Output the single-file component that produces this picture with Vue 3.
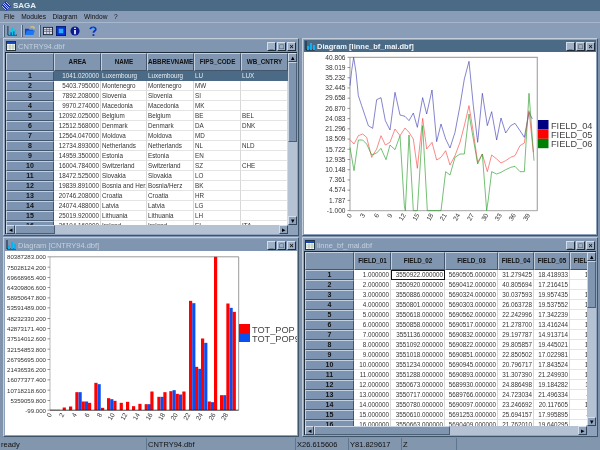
<script setup>
// chart points are read off a 3x grid, pts() brings them back to pixels
const pts = list => list.map(([x, y]) => `${x / 3},${y / 3}`).join(' ')

const blue = [[150,170],[155,125],[161,85],[168,130],[175,200],[185,230],[195,260],[205,290],[218,298],[230,212],[243,206],[256,275],[270,303],[285,190],[300,258],[315,262],[327,275],[340,252],[352,295],[368,206],[380,255],[396,183],[410,338],[423,285],[437,330],[450,357],[465,310],[480,230],[493,150],[507,97],[520,230],[533,340],[547,193],[562,290],[575,248],[590,333],[603,267],[617,312],[632,290],[645,283],[660,305],[673,325],[687,250],[697,270]]
const red = [[150,332],[162,345],[175,320],[188,315],[200,325],[215,385],[230,360],[243,320],[256,348],[270,340],[285,300],[300,320],[315,297],[327,310],[340,330],[352,418],[368,268],[380,360],[396,340],[410,393],[423,385],[437,365],[450,408],[465,380],[480,340],[493,290],[507,230],[520,310],[533,400],[547,375],[562,428],[575,378],[590,390],[603,402],[617,395],[632,385],[645,380],[660,350],[673,342],[687,245],[700,370]]
const green = [[150,355],[162,425],[175,333],[188,333],[200,345],[215,378],[230,372],[243,358],[258,392],[270,348],[285,362],[300,320],[313,530],[316,545],[327,318],[340,545],[352,545],[368,290],[382,545],[423,545],[437,428],[450,438],[465,385],[480,375],[493,375],[507,255],[520,330],[533,405],[547,375],[560,545],[565,510],[575,428],[590,435],[603,430],[617,422],[632,415],[645,412],[660,428],[673,428],[687,193],[702,395]]
const series = [
  { color: '#3a3ab0', data: blue },
  { color: '#f84040', data: red },
  { color: '#209a20', data: green }
]

const lineY = ['40.806', '38.019', '35.232', '32.445', '29.658', '26.870', '24.083', '21.296', '18.509', '15.722', '12.935', '10.148', '7.361', '4.574', '1.787', '-1.000']
const lineX = [[150, '0'], [190, '3'], [232, '6'], [272, '9'], [312, '12'], [353, '15'], [395, '18'], [435, '21'], [475, '24'], [517, '27'], [560, '30'], [600, '33'], [642, '36'], [685, '39']]
const lineLegend = [['#000080', 'FIELD_04'], ['#ff0000', 'FIELD_05'], ['#008000', 'FIELD_06']]

const barY = ['80387283.000', '75028124.200', '69668965.400', '64309806.600', '58950647.800', '53591489.000', '48232330.200', '42873171.400', '37514012.600', '32154853.800', '26795695.000', '21436536.200', '16077377.400', '10718218.600', '5359059.800', '-99.000']
const barYPos = [67, 98, 129, 159, 190, 220, 252, 282, 313, 344, 375, 405, 436, 467, 498, 527]
const barX = ['0', '2', '4', '6', '8', '10', '12', '14', '16', '18', '20', '22', '24', '26', '28']
// x, top of red bar, top of blue bar (0 = no blue bar)
const bars = [[150,526,526],[170,526,0],[188,519,0],[207,516,0],[226,473,473],[245,501,501],[264,505,0],[283,445,449],[303,520,0],[321,491,494],[340,499,0],[359,505,0],[378,502,0],[396,515,0],[415,508,0],[434,509,509],[451,471,0],[472,487,487],[490,473,0],[508,470,467],[527,478,480],[547,471,0],[567,199,206],[585,397,403],[603,312,325],[623,501,503],[642,67,0],[660,482,482],[679,207,220],[698,232,0]]

const tables = [
  {
    key: 'cntry',
    title: 'CNTRY94.dbf',
    cols: [48, 47, 46, 47, 47, 47, 30],
    left: [false, true, true, true, true, false],
    head: ['AREA', 'NAME', 'ABBREVNAME', 'FIPS_CODE', 'WB_CNTRY', ''],
    rows: [
      ['1041.020000', 'Luxembourg', 'Luxembourg', 'LU', 'LUX', ''],
      ['5403.795000', 'Montenegro', 'Montenegro', 'MW', '', ''],
      ['7892.208000', 'Slovenia', 'Slovenia', 'SI', '', ''],
      ['9970.274000', 'Macedonia', 'Macedonia', 'MK', '', ''],
      ['12092.025000', 'Belgium', 'Belgium', 'BE', 'BEL', ''],
      ['12512.568000', 'Denmark', 'Denmark', 'DA', 'DNK', ''],
      ['12564.047000', 'Moldova', 'Moldova', 'MD', '', ''],
      ['12734.893000', 'Netherlands', 'Netherlands', 'NL', 'NLD', ''],
      ['14959.350000', 'Estonia', 'Estonia', 'EN', '', ''],
      ['16004.784000', 'Switzerland', 'Switzerland', 'SZ', 'CHE', ''],
      ['18472.525000', 'Slovakia', 'Slovakia', 'LO', '', ''],
      ['19839.891000', 'Bosnia and Herz', 'Bosnia/Herz', 'BK', '', ''],
      ['20746.208000', 'Croatia', 'Croatia', 'HR', '', ''],
      ['24074.488000', 'Latvia', 'Latvia', 'LG', '', ''],
      ['25019.920000', 'Lithuania', 'Lithuania', 'LH', '', ''],
      ['26194.160000', 'Ireland', 'Ireland', 'EI', 'ITA', '']
    ],
    selectedRow: 0,
    thumbV: 80,
    thumbH: 40
  },
  {
    key: 'linie',
    title: 'linne_bf_mai.dbf',
    cols: [49, 37, 54, 53, 36, 36, 36],
    left: [],
    head: ['FIELD_01', 'FIELD_02', 'FIELD_03', 'FIELD_04', 'FIELD_05', 'FIELD_06'],
    rows: [
      ['1.000000', '3550922.000000', '5690505.000000', '31.279425', '18.418933', '16.392'],
      ['2.000000', '3550920.000000', '5690412.000000', '40.805694', '17.216415', '9.851'],
      ['3.000000', '3550886.000000', '5690324.000000', '30.037593', '19.957435', '18.092'],
      ['4.000000', '3550801.000000', '5690303.000000', '26.063728', '19.537552', '18.341'],
      ['5.000000', '3550618.000000', '5690562.000000', '22.242996', '17.342239', '15.932'],
      ['6.000000', '3550858.000000', '5690517.000000', '21.278700', '13.416244', '14.061'],
      ['7.000000', '3551136.000000', '5690832.000000', '29.197787', '14.913714', '14.292'],
      ['8.000000', '3551092.000000', '5690822.000000', '29.805857', '19.445021', '15.921'],
      ['9.000000', '3551018.000000', '5690851.000000', '22.850502', '17.022981', '12.841'],
      ['10.000000', '3551234.000000', '5690945.000000', '20.796717', '17.843524', '16.642'],
      ['11.000000', '3551288.000000', '5690893.000000', '31.307390', '21.249930', '15.451'],
      ['12.000000', '3550673.000000', '5689930.000000', '24.886498', '19.184282', '19.112'],
      ['13.000000', '3550717.000000', '5689766.000000', '24.723034', '21.496334', '-1.000'],
      ['14.000000', '3550780.000000', '5690097.000000', '23.246692', '20.117605', '19.601'],
      ['15.000000', '3550610.000000', '5691253.000000', '25.694157', '17.995895', '-1.000'],
      ['16.000000', '3550663.000000', '5690409.000000', '21.762010', '19.640295', '-1.000']
    ],
    selectedRow: -1,
    focusCell: [0, 1],
    thumbV: 47,
    thumbH: 136
  }
]
</script>

<template>
  <div class="saga">
    <div class="app-title">
      <svg class="logo" viewBox="0 0 10 10">
        <path d="M5 0 10 5 5 10 0 5Z" fill="#1530c0" />
        <path d="M2 3 7 8M3 2 8 7M5 1 9 5M1 5 5 9" stroke="#fff" stroke-width=".7" />
      </svg>
      <span>SAGA</span>
    </div>
    <div class="menu">
      <span>File</span><span>Modules</span><span>Diagram</span><span>Window</span><span>?</span>
    </div>
    <div class="toolbar">
      <i class="sep"></i>
      <svg class="tool" viewBox="0 0 11 11">
        <path d="M1 0v10h10" fill="none" stroke="#123" />
        <path d="M2 10V5h2v5zM5 10V2h2v8zM8 10V4h2v6z" fill="#08c8e8" />
        <path d="M4 10V7h1v3zM7 10V6h1v4z" fill="#1020c0" />
      </svg>
      <i class="sep"></i>
      <svg class="tool" viewBox="0 0 11 11">
        <path d="M0 3h4l1 1h4v6H0z" fill="#1040c0" />
        <path d="M2 5h9l-2 5H0z" fill="#1c78f0" />
        <path d="M6 1l4 0v2" fill="none" stroke="#f0e040" />
      </svg>
      <i class="sep"></i>
      <svg class="tool" viewBox="0 0 11 11">
        <rect x=".5" y="1.5" width="10" height="8" fill="#dde" stroke="#123" />
        <path d="M1 4h9M1 6h9M4 2v7M7 2v7" stroke="#456" stroke-width=".7" />
      </svg>
      <svg class="tool t4" viewBox="0 0 11 11">
        <rect x=".5" y=".5" width="10" height="10" fill="#0a30d8" stroke="#061a70" />
        <rect x="3" y="3" width="5" height="5" fill="#28b0ff" />
      </svg>
      <svg class="tool t5" viewBox="0 0 11 11">
        <circle cx="5.5" cy="5.5" r="5" fill="#0a1a90" />
        <path d="M4.6 2h1.8v1.4H4.6zM4.6 4.4h1.8V9H4.6z" fill="#fff" />
      </svg>
      <svg class="tool t6" viewBox="0 0 11 11">
        <path d="M2.5 3.5C3 1 8 .5 8.5 3.5 8.8 5.5 6 5.5 6 7.5" fill="none" stroke="#0c30c8" stroke-width="2" />
        <path d="M5 9h2v2H5z" fill="#0c30c8" />
        <path d="M4 3c1-1 3-1 3 .5" fill="none" stroke="#30d0f0" />
      </svg>
    </div>

    <div class="desk">
      <section
        v-for="t in tables"
        :key="t.key"
        class="win"
        :class="t.key"
      >
        <header class="win-title">
          <svg class="win-icon" viewBox="0 0 10 10">
            <rect x=".5" y=".5" width="9" height="9" fill="#fff" stroke="#234" />
            <path d="M1 1h8v2H1z" fill="#1848c8" />
            <path d="M1 5h8M1 7h8M4 3v6M7 3v6" stroke="#8a8" stroke-width=".6" />
          </svg>
          <span class="win-name">{{ t.title }}</span>
          <span class="win-btns"><b>_</b><b>□</b><b>×</b></span>
        </header>
        <div class="grid-box">
          <div class="grid-clip">
            <table class="dbf">
              <colgroup>
                <col v-for="(w, i) in t.cols" :key="i" :style="{ width: w + 'px' }" />
              </colgroup>
              <thead>
                <tr>
                  <th></th>
                  <th v-for="h in t.head" :key="h">{{ h }}</th>
                </tr>
              </thead>
              <tbody>
                <tr v-for="(row, r) in t.rows" :key="r" :class="{ sel: r === t.selectedRow }">
                  <th>{{ r + 1 }}</th>
                  <td
                    v-for="(v, c) in row"
                    :key="c"
                    :class="{ left: t.left[c], focus: t.focusCell && t.focusCell[0] === r && t.focusCell[1] === c }"
                  >{{ v }}</td>
                </tr>
              </tbody>
            </table>
          </div>
          <div class="sb-v">
            <span class="sb-btn">▴</span>
            <span class="sb-track"><i :style="{ height: t.thumbV + 'px' }"></i></span>
            <span class="sb-btn">▾</span>
          </div>
          <div class="sb-h">
            <span class="sb-btn">◂</span>
            <span class="sb-track"><i :style="{ width: t.thumbH + 'px' }"></i></span>
            <span class="sb-btn">▸</span>
          </div>
          <div class="sb-corner"></div>
        </div>
      </section>

      <section class="win line-win">
        <header class="win-title active">
          <svg class="win-icon" viewBox="0 0 10 10">
            <path d="M1 0v9h9" fill="none" stroke="#123" />
            <path d="M2 9V5h2v4zM5 9V2h2v7zM8 9V4h2v5z" fill="#10b0f0" />
          </svg>
          <span class="win-name">Diagram [linne_bf_mai.dbf]</span>
          <span class="win-btns"><b>_</b><b>□</b><b>×</b></span>
        </header>
        <svg class="plot" viewBox="4 23 292 182">
          <path d="M50 28.3H237.3V181.7" fill="none" stroke="#a8a8a8" stroke-width="1.2" />
          <path d="M50 28.3V181.7H237.3" fill="none" stroke="#8c8c8c" stroke-width=".8" />
          <path
            v-for="(l, i) in lineY"
            :key="l"
            :d="`M47.5 ${28.3 + i * 10.22}H50`"
            stroke="#555"
            stroke-width=".6"
          />
          <polyline
            v-for="s in series"
            :key="s.color"
            :points="pts(s.data)"
            fill="none"
            :stroke="s.color"
            stroke-opacity=".62"
            stroke-width="1"
          />
          <text
            v-for="(l, i) in lineY"
            :key="l"
            class="tick"
            x="45.5"
            :y="30.6 + i * 10.22"
            text-anchor="end"
          >{{ l }}</text>
          <text
            v-for="[x, l] in lineX"
            :key="l"
            class="tick"
            text-anchor="end"
            :transform="`translate(${x / 3 + 2} 186) rotate(-60)`"
          >{{ l }}</text>
          <g v-for="([c, l], i) in lineLegend" :key="l">
            <rect x="238" :y="91 + i * 9.4" width="10.5" height="9.4" :fill="c" />
            <text class="legend" x="251" :y="99.5 + i * 9.4">{{ l }}</text>
          </g>
        </svg>
      </section>

      <section class="win bar-win">
        <header class="win-title">
          <svg class="win-icon" viewBox="0 0 10 10">
            <path d="M1 0v9h9" fill="none" stroke="#123" />
            <path d="M2 9V5h2v4zM5 9V2h2v7zM8 9V4h2v5z" fill="#10b0f0" />
          </svg>
          <span class="win-name">Diagram [CNTRY94.dbf]</span>
          <span class="win-btns"><b>_</b><b>□</b><b>×</b></span>
        </header>
        <svg class="plot" viewBox="5 17 292 183">
          <path d="M50 22.3H238.7V175.7" fill="none" stroke="#808080" stroke-width=".8" />
          <path d="M50 22.3V175.7" fill="none" stroke="#a8a8a8" stroke-width=".8" />
          <path
            v-for="(l, i) in barY"
            :key="l"
            :d="`M47.5 ${barYPos[i] / 3}H50`"
            stroke="#555"
            stroke-width=".6"
          />
          <g v-for="[x, r, b] in bars" :key="x">
            <rect :x="x / 3" :y="r / 3" width="3.2" :height="(527 - r) / 3" fill="#ff0000" />
            <rect v-if="b" :x="x / 3 + 3.2" :y="b / 3" width="3.2" :height="(527 - b) / 3" fill="#0a50f0" />
          </g>
          <path d="M50 175.7H238.7" fill="none" stroke="#111" stroke-width=".8" />
          <text
            v-for="(l, i) in barY"
            :key="l"
            class="tick small"
            x="46"
            :y="barYPos[i] / 3 + 2.4"
            text-anchor="end"
          >{{ l }}</text>
          <text
            v-for="(l, i) in barX"
            :key="l"
            class="tick"
            text-anchor="end"
            :transform="`translate(${52 + i * 12.6} 180) rotate(-60)`"
          >{{ l }}</text>
          <rect x="239" y="89.5" width="11" height="9" fill="#ff0000" />
          <rect x="239" y="98.5" width="11" height="9" fill="#0a50f0" />
          <text class="legend" x="252" y="98">TOT_POP</text>
          <text class="legend" x="252" y="107">TOT_POP9</text>
        </svg>
      </section>
    </div>

    <footer class="status">
      <span class="p1">ready</span>
      <span class="p2">CNTRY94.dbf</span>
      <span class="p3">X26.615606</span>
      <span class="p4">Y81.829617</span>
      <span class="p5">Z</span>
      <span class="p6"></span>
    </footer>
  </div>
</template>

<style scoped>
.saga {
  width: 600px;
  height: 450px;
  overflow: hidden;
  display: flex;
  flex-direction: column;
  background: #8a9db8;
  font-family: "Liberation Sans", Arial, sans-serif;
  font-size: 8px;
  color: #111;
  filter: blur(0.4px);
}

.app-title {
  height: 11px;
  display: flex;
  align-items: center;
  gap: 2px;
  padding-left: 1px;
  background: #4a6a85;
  color: #e8eef4;
  font-weight: bold;
  font-size: 8px;
}

.logo {
  width: 10px;
  height: 10px;
}

.menu {
  height: 12px;
  display: flex;
  align-items: center;
  gap: 6.5px;
  padding-left: 4px;
  border-bottom: 1px solid #a8b8cc;
  box-sizing: border-box;
  font-size: 6.6px;
}

.toolbar {
  height: 15px;
  display: flex;
  align-items: center;
  padding-left: 3px;
  border-bottom: 1px solid #3e5468;
  margin-bottom: -1px;
}

.sep {
  width: 2px;
  height: 12px;
  box-sizing: border-box;
  border-left: 1px solid #c0ccdc;
  border-right: 1px solid #4a6078;
  margin: 0 2px 0 4px;
  flex: none;
}

.sep:first-child {
  margin-left: 0;
}

.tool {
  width: 10px;
  height: 10px;
  flex: none;
}

.t4 {
  margin-left: 3px;
}

.t5 {
  margin-left: 4px;
}

.t6 {
  margin-left: 8px;
}

.desk {
  flex: 1;
  min-height: 0;
  display: grid;
  grid-template-columns: 296px 296px;
  grid-template-rows: 198px 200px;
  column-gap: 3px;
  row-gap: 1px;
  padding: 0 0 1px 3px;
  background: #7f93ac;
}

.win {
  min-width: 0;
  min-height: 0;
  display: flex;
  flex-direction: column;
  background: #8ea2bc;
  border: 1px solid #3e5468;
  border-top-color: #c2cedc;
  border-left-color: #c2cedc;
  box-sizing: border-box;
  padding: 1px;
  overflow: hidden;
}

.cntry {
  grid-area: 1 / 1;
}

.line-win {
  grid-area: 1 / 2;
}

.bar-win {
  grid-area: 2 / 1;
}

.linie {
  grid-area: 2 / 2;
}

.win-title {
  height: 12px;
  flex: none;
  display: flex;
  align-items: center;
  gap: 2px;
  padding: 0 1px;
  background: #8096b0;
  color: #c4d0de;
  font-size: 7.5px;
}

.win-title.active {
  background: #4a6a85;
  color: #f0f4f8;
  font-weight: bold;
}

.win-icon {
  width: 10px;
  height: 10px;
  flex: none;
}

.win-name {
  flex: 1;
  white-space: nowrap;
}

.win-btns {
  display: flex;
  gap: 1px;
}

.win-btns b {
  width: 9px;
  height: 9px;
  display: flex;
  align-items: center;
  justify-content: center;
  background: #9db0c6;
  border: 1px solid #1e2c3c;
  border-top-color: #d4deea;
  border-left-color: #d4deea;
  box-sizing: border-box;
  font-size: 7px;
  line-height: 1;
  color: #111;
  font-weight: bold;
}

.grid-box {
  flex: 1;
  min-height: 0;
  display: grid;
  grid-template-columns: 1fr 9px;
  grid-template-rows: 1fr 9px;
  background: #8ea2bc;
  border-top: 1px solid #1c2a38;
  border-left: 1px solid #1c2a38;
}

.grid-clip {
  overflow: hidden;
  background: #fff;
  min-width: 0;
  min-height: 0;
}

.dbf {
  table-layout: fixed;
  border-collapse: separate;
  border-spacing: 0;
  width: 0;
  font-size: 6.3px;
  line-height: 8px;
}

.dbf th {
  background: #7d93b2;
  border: 1px solid #43566c;
  border-top-color: #c4d0de;
  border-left-color: #c4d0de;
  padding: 0;
  box-sizing: border-box;
  font-weight: bold;
  text-align: center;
  height: 10px;
  font-size: 7px;
  white-space: nowrap;
  overflow: hidden;
}

.dbf thead th {
  height: 18px;
  background: #7f95b0;
  font-size: 6.3px;
}

.dbf td {
  height: 10px;
  padding: 0 1px;
  box-sizing: border-box;
  border-right: 1px solid #d8d8d8;
  border-bottom: 1px solid #e4e4e4;
  text-align: right;
  white-space: nowrap;
  overflow: hidden;
  color: #333;
  background: #fff;
}

.dbf td.left {
  text-align: left;
}

.dbf td.focus {
  outline: 1px solid #111;
  outline-offset: -1px;
}

.sel td {
  background: #4a6a85;
  color: #e4ecf4;
  border-color: #4a6a85;
}

.sb-v,
.sb-h {
  display: flex;
  background: #b4c2d4;
}

.sb-v {
  flex-direction: column;
}

.sb-btn {
  flex: none;
  width: 9px;
  height: 9px;
  display: flex;
  align-items: center;
  justify-content: center;
  background: #8ea2bc;
  border: 1px solid #33475c;
  border-top-color: #d4deea;
  border-left-color: #d4deea;
  box-sizing: border-box;
  font-size: 7px;
  line-height: 1;
  color: #000;
}

.sb-track {
  flex: 1;
  display: flex;
  align-items: flex-start;
}

.sb-track i {
  display: block;
  width: 100%;
  height: 100%;
  background: #8096b0;
  border: 1px solid #4a5e74;
  border-top-color: #c8d4e2;
  border-left-color: #c8d4e2;
  box-sizing: border-box;
}

.sb-corner {
  background: #8ea2bc;
}

.plot {
  flex: 1;
  min-height: 0;
  width: 100%;
  background: #fff;
  display: block;
}

.tick {
  font-size: 6.6px;
  fill: #333;
}

.tick.small {
  font-size: 6.1px;
}

.legend {
  font-size: 9.2px;
  fill: #444;
}

.status {
  height: 12px;
  flex: none;
  display: flex;
  gap: 1px;
  background: #5e7690;
  font-size: 7.5px;
  color: #111;
}

.status span {
  background: #8296ae;
  padding-left: 1px;
  display: flex;
  align-items: center;
  overflow: hidden;
  white-space: nowrap;
  box-sizing: border-box;
}

.p1 {
  width: 146px;
}

.p2 {
  width: 148px;
}

.p3 {
  width: 52px;
}

.p4 {
  width: 52px;
}

.p5 {
  width: 54px;
}

.p6 {
  flex: 1;
}
</style>

<style>
html,
body {
  margin: 0;
  background: #8a9db8;
}
</style>
